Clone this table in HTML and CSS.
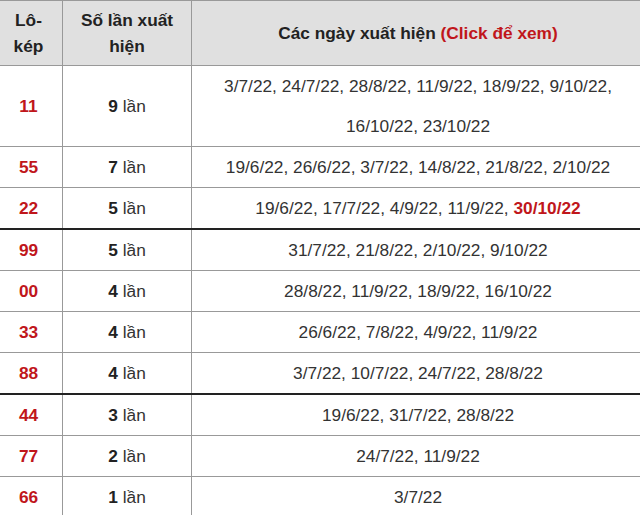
FILE: index.html
```html
<!DOCTYPE html>
<html>
<head>
<meta charset="utf-8">
<link rel="stylesheet" href="styles.css">
</head>
<body>
<table class="tbl">
  <thead>
    <tr>
      <th class="c1">Lô-<br>kép</th>
      <th class="c2">Số lần xuất<br>hiện</th>
      <th class="c3">Các ngày xuất hiện <span class="red">(Click để xem)</span></th>
    </tr>
  </thead>
  <tbody>
    <tr><td class="num">11</td><td><b>9</b> lần</td><td>3/7/22, 24/7/22, 28/8/22, 11/9/22, 18/9/22, 9/10/22,<br>16/10/22, 23/10/22</td></tr>
    <tr><td class="num">55</td><td><b>7</b> lần</td><td>19/6/22, 26/6/22, 3/7/22, 14/8/22, 21/8/22, 2/10/22</td></tr>
    <tr><td class="num">22</td><td><b>5</b> lần</td><td>19/6/22, 17/7/22, 4/9/22, 11/9/22, <b class="red">30/10/22</b></td></tr>
    <tr class="sep"><td class="num">99</td><td><b>5</b> lần</td><td>31/7/22, 21/8/22, 2/10/22, 9/10/22</td></tr>
    <tr><td class="num">00</td><td><b>4</b> lần</td><td>28/8/22, 11/9/22, 18/9/22, 16/10/22</td></tr>
    <tr><td class="num">33</td><td><b>4</b> lần</td><td>26/6/22, 7/8/22, 4/9/22, 11/9/22</td></tr>
    <tr><td class="num">88</td><td><b>4</b> lần</td><td>3/7/22, 10/7/22, 24/7/22, 28/8/22</td></tr>
    <tr class="sep"><td class="num">44</td><td><b>3</b> lần</td><td>19/6/22, 31/7/22, 28/8/22</td></tr>
    <tr><td class="num">77</td><td><b>2</b> lần</td><td>24/7/22, 11/9/22</td></tr>
    <tr><td class="num">66</td><td><b>1</b> lần</td><td>3/7/22</td></tr>
  </tbody>
</table>
</body>
</html>
```
FILE: styles.css
```css
html, body {
  margin: 0;
  padding: 0;
  background: #fff;
  overflow: hidden;
}
body {
  font-family: "Liberation Sans", Arial, sans-serif;
  font-size: 17.3px;
  color: #333;
}
.tbl {
  border-collapse: collapse;
  margin-left: -6px;
  width: 651px;
  table-layout: fixed;
}
.tbl th, .tbl td {
  border: 1px solid #999;
  text-align: center;
  padding: 0;
}
.tbl th {
  background: #e0e0e0;
  color: #222;
  font-weight: bold;
  line-height: 26px;
  padding: 6px 0 6px;
  vertical-align: middle;
}
.c1 { width: 67px; }
.c2 { width: 128px; }
.tbl td {
  line-height: 40px;
  height: 40px;
}
.tbl td b { color: #222; }
.num {
  color: #c0161b;
  font-weight: bold;
}
.red, .tbl td b.red { color: #c0161b; }
.tbl tr.sep td {
  border-top: 2px solid #222;
}
```
